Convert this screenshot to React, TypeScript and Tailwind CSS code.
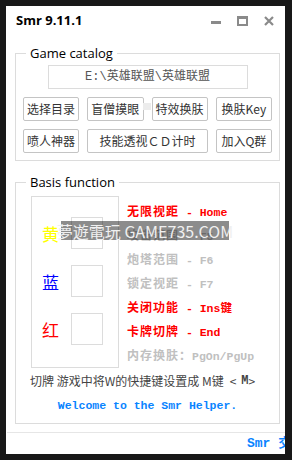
import type { ReactNode } from "react";

const cjk = '"Noto Sans CJK SC", "Noto Sans", sans-serif';
const ui = '"Open Sans", "Noto Sans CJK SC", sans-serif';
const pix = '"Liberation Mono", "Noto Sans CJK SC", monospace';

const Btn = ({ children, className = "" }: { children: ReactNode; className?: string }) => (
  <button
    type="button"
    className={`h-[24px] border border-[#c4c4c4] rounded-[2px] bg-white text-[12px] text-[#333] leading-none ${className}`}
    style={{ fontFamily: cjk }}
  >
    {children}
  </button>
);

const hotkeys = [
  { cn: "无限视距", key: " - Home", on: true },
  { cn: "攻击范围", key: " - F5", on: false },
  { cn: "炮塔范围", key: " - F6", on: false },
  { cn: "锁定视距", key: " - F7", on: false },
  { cn: "关闭功能", key: " - Ins键", on: true },
  { cn: "卡牌切牌", key: " - End", on: true },
  { cn: "内存换肤：", key: "PgOn/PgUp", on: false },
];

const colors = [
  { label: "黄", cls: "text-[#ffff00]" },
  { label: "蓝", cls: "text-[#0000ff]" },
  { label: "红", cls: "text-[#ff0000]" },
];

export default function App() {
  return (
    <div className="w-[292px] h-[460px] bg-[#181818] pl-[6px] pt-[6px] pr-[7px] pb-[6px]">
      <div className="relative w-full h-full bg-white flex flex-col overflow-hidden">
        {/* title bar */}
        <div className="h-[30px] flex items-center pl-[10px] pr-[11px]">
          <span className="text-[13px] font-bold text-black" style={{ fontFamily: ui }}>
            Smr 9.11.1
          </span>
          <div className="ml-auto flex items-center gap-[16px]">
            <svg width="10" height="10" viewBox="0 0 10 10">
              <rect x="0" y="5" width="10" height="3" fill="#8a8a8a" />
            </svg>
            <svg width="11" height="10" viewBox="0 0 11 10">
              <rect x="1" y="1.5" width="9" height="7.5" fill="none" stroke="#8a8a8a" strokeWidth="2" />
              <rect x="0" y="0" width="11" height="3" fill="#8a8a8a" />
            </svg>
            <svg width="10" height="10" viewBox="0 0 10 10">
              <path d="M1 1 L9 9 M9 1 L1 9" stroke="#8a8a8a" strokeWidth="2.2" />
            </svg>
          </div>
        </div>

        {/* Game catalog */}
        <fieldset className="mt-[9px] ml-[9px] w-[265px] border border-[#dcdcdc] pb-[7px]">
          <legend className="ml-[10px] px-[4px] text-[13px] leading-[16px] text-black" style={{ fontFamily: ui }}>
            Game catalog
          </legend>
          <div
            className="mx-auto mt-[4px] w-[200px] h-[24px] border border-[#dcdcdc] flex items-center justify-center text-[12px] text-[#555]"
            style={{ fontFamily: pix }}
          >
            E:\英雄联盟\英雄联盟
          </div>
          <div className="relative mt-[8px] px-[7px] grid grid-cols-4 gap-[8px]">
            <Btn>选择目录</Btn>
            <Btn>盲僧摸眼</Btn>
            <Btn>特效换肤</Btn>
            <Btn>换肤Key</Btn>
            <Btn>喷人神器</Btn>
            <Btn className="col-span-2">技能透视ＣＤ计时</Btn>
            <Btn>加入Q群</Btn>
            <div className="absolute left-[127px] top-[6px] w-[8px] h-[7px] bg-[#ececec]" />
          </div>
        </fieldset>

        {/* Basis function */}
        <fieldset className="mt-[13px] ml-[9px] w-[265px] border border-[#dcdcdc] pb-[9px]">
          <legend className="ml-[10px] px-[4px] text-[13px] leading-[16px] text-black" style={{ fontFamily: ui }}>
            Basis function
          </legend>
          <div className="mt-[6px] ml-[15px] flex items-start gap-[8px]">
            <div className="w-[88px] h-[172px] border border-[#dcdcdc] flex flex-col pt-[20px] gap-[16px]">
              {colors.map((c) => (
                <div key={c.label} className="h-[32px] flex items-center pl-[10px] gap-[12px]">
                  <span className={`text-[17px] leading-none ${c.cls}`} style={{ fontFamily: cjk }}>
                    {c.label}
                  </span>
                  <div className="w-[32px] h-[32px] border border-[#dcdcdc]" />
                </div>
              ))}
            </div>
            <div className="pt-[5px] flex flex-col">
              {hotkeys.map((h) => (
                <div
                  key={h.cn}
                  className={`h-[24px] flex items-center whitespace-pre font-bold ${h.on ? "text-[#ff0000]" : "text-[#c0c0c0]"}`}
                  style={{ fontFamily: pix }}
                >
                  <span className="text-[12px] tracking-[1px]">{h.cn}</span>
                  <span className="text-[11.5px]">{h.key}</span>
                </div>
              ))}
            </div>
          </div>
          <div
            className="mt-[4px] pl-[14px] h-[16px] flex items-center whitespace-pre text-[12px] text-[#444]"
            style={{ fontFamily: cjk }}
          >
            <span>切牌 游戏中将W的快捷键设置成 M键</span>
            <span className="ml-[6px]">&lt;</span>
            <span className="ml-[5px] font-bold" style={{ fontFamily: pix }}>
              M
            </span>
            <span>&gt;</span>
          </div>
          <div
            className="mt-[9px] h-[16px] flex items-center justify-center text-[11.5px] font-bold text-[#0a84ff]"
            style={{ fontFamily: pix }}
          >
            Welcome to the Smr Helper.
          </div>
        </fieldset>

        <div className="mt-[8px] ml-[1px] border-t border-[#e6e6e6]" />
        <div
          className="h-[21px] pl-[241px] flex items-center whitespace-nowrap overflow-hidden text-[13px] font-bold text-[#0a84ff]"
          style={{ fontFamily: pix }}
        >
          Smr 交流群
        </div>

        {/* watermark */}
        <div
          className="absolute left-[55px] top-[215px] w-[168px] h-[19px] bg-black/45 flex items-center justify-center text-[16px] leading-none text-[#f0f0f0] whitespace-nowrap"
          style={{ fontFamily: cjk }}
        >
          夢遊電玩 GAME735.COM
        </div>
      </div>
    </div>
  );
}
